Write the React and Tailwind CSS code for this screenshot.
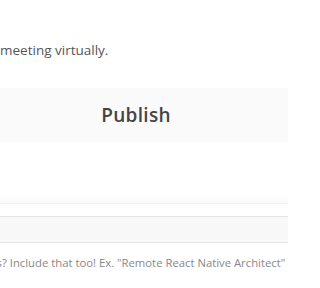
import React from 'react';

const font = { fontFamily: '"Open Sans", "Noto Sans", sans-serif' };

export default function App() {
  return (
    <div className="h-[288px] w-[288px] overflow-hidden bg-white" style={font}>
      <div className="h-[42px]" />
      <p className="whitespace-nowrap text-[13.5px] leading-[17px] text-[#555555]">
        meeting virtually.
      </p>
      <div className="h-[29px]" />
      <div className="flex h-[54px] items-center justify-center bg-[#fafafa] pr-[16px]">
        <span className="text-[19px] font-semibold tracking-[0.3px] text-[#444444]">Publish</span>
      </div>
      <div className="h-[54px]" />
      <div className="h-[8px] border-b border-[#f0f0f0] bg-[#fcfcfc]" />
      <div className="h-[12px]" />
      <div className="h-[27px] border-y border-[#e2e2e2] bg-[#f8f8f8]" />
      <div className="h-[13px]" />
      <p className="-ml-[20px] whitespace-nowrap text-[11.3px] leading-[14px] text-[#888888]">
        jobs? Include that too! Ex. "Remote React Native Architect" - 
      </p>
    </div>
  );
}
